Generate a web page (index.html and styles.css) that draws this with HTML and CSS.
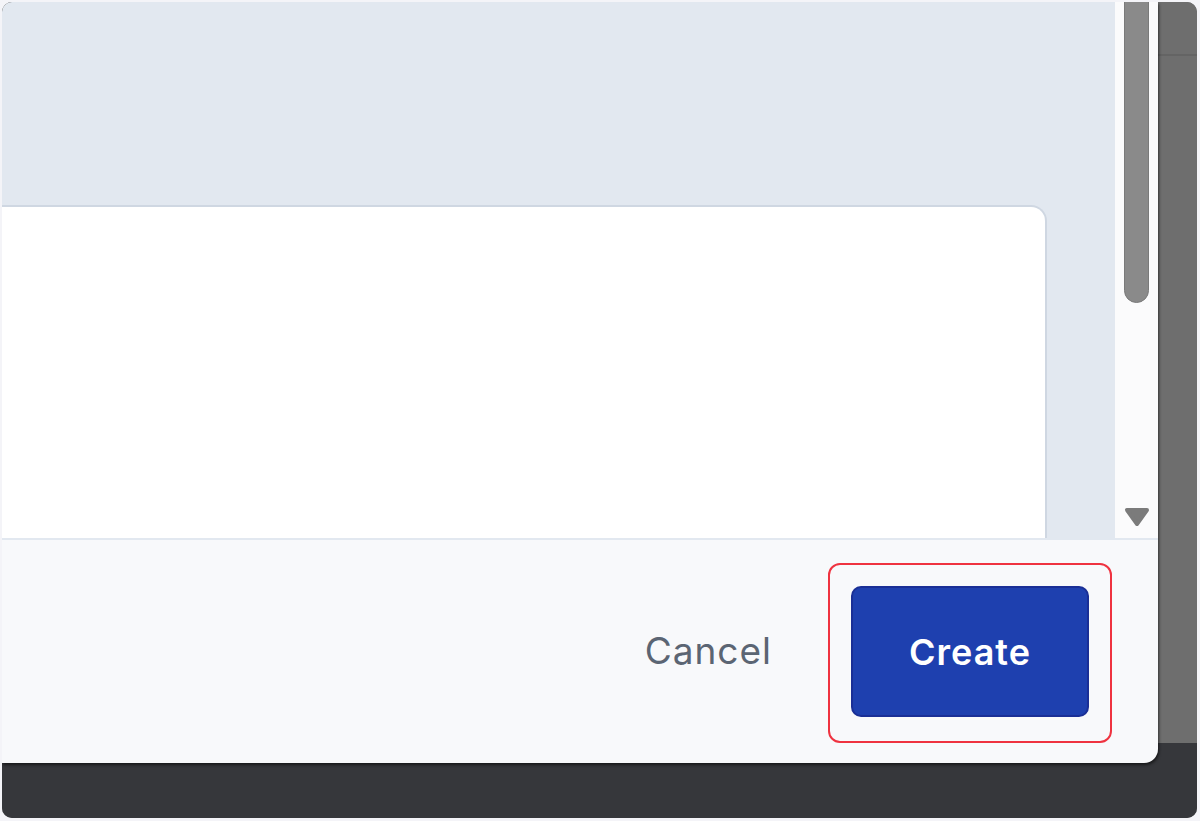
FILE: index.html
```html
<!DOCTYPE html>
<html lang="en">
<head>
<meta charset="utf-8">
<title>Create dialog</title>
<link rel="stylesheet" href="styles.css">
</head>
<body>
<div class="screen">
  <div class="backdrop">
    <div class="topbar"></div>
  </div>
  <div class="taskbar"></div>
  <div class="dialog">
    <div class="dialog-body">
      <div class="content">
        <div class="card"></div>
      </div>
      <div class="scrollbar">
        <div class="thumb"></div>
        <svg class="arrow" width="26" height="20" viewBox="0 0 26 20">
          <path d="M3 3 L23 3 L13 17 Z" fill="#7b7b7b" stroke="#7b7b7b" stroke-width="4" stroke-linejoin="round"/>
        </svg>
      </div>
    </div>
    <div class="footer">
      <button class="cancel" type="button">Cancel</button>
      <div class="highlight">
        <button class="create" type="button">Create</button>
      </div>
    </div>
  </div>
</div>
</body>
</html>
```

FILE: styles.css
```css
html, body {
  margin: 0;
  padding: 0;
  background: #f4f4f8;
}

.screen {
  position: relative;
  margin: 2px 3px 3px 2px;
  height: 816px;
  border-radius: 10px;
  overflow: hidden;
  display: flex;
  flex-direction: column;
  background: #6e6e6e;
}

.backdrop {
  flex: 1;
  background: #6e6e6e;
}

.topbar {
  height: 52px;
  border-bottom: 2px solid #646464;
}

.taskbar {
  height: 75px;
  background: #36373b;
}

.dialog {
  position: absolute;
  left: 0;
  top: 0;
  width: 1156px;
  height: 761px;
  display: flex;
  flex-direction: column;
  overflow: hidden;
  border-bottom-right-radius: 14px;
  box-shadow: 1px 2px 3px rgba(0, 0, 0, 0.55);
  font-family: Inter, "Liberation Sans", sans-serif;
}

.dialog-body {
  flex: 1;
  display: flex;
  min-height: 0;
}

.content {
  flex: 1;
  background: #e2e8f0;
  padding-top: 203px;
  display: flex;
}

.card {
  flex: 1;
  margin-left: -10px;
  margin-right: 68px;
  background: #ffffff;
  border-top: 2px solid #cfd7e2;
  border-right: 2px solid #cfd7e2;
  border-top-right-radius: 16px;
}

.scrollbar {
  width: 43px;
  background: #fbfbfc;
  display: flex;
  flex-direction: column;
  align-items: center;
  justify-content: space-between;
}

.thumb {
  margin-top: -20px;
  width: 23px;
  height: 319px;
  border: 1px solid #7a7a7a;
  border-radius: 13px;
  background: #8a8a8a;
}

.arrow {
  display: block;
  margin-bottom: 11px;
}

.footer {
  height: 220px;
  padding: 3px 46px 0 0;
  border-top: 2px solid #e2e8f0;
  background: #f8f9fb;
  display: flex;
  align-items: center;
  justify-content: flex-end;
  gap: 56px;
}

.cancel {
  border: none;
  background: none;
  padding: 0 0 6px 0;
  font-family: Inter, "Liberation Sans", sans-serif;
  font-size: 37px;
  letter-spacing: 1px;
  font-weight: 400;
  color: #5b6573;
}

.highlight {
  padding: 21px 21px 24px 21px;
  border: 2px solid #ef3340;
  border-radius: 12px;
  display: flex;
}

.create {
  width: 238px;
  height: 131px;
  border: 2px solid #1a2f96;
  border-radius: 10px;
  background: #1e40af;
  color: #ffffff;
  font-family: Inter, "Liberation Sans", sans-serif;
  font-size: 36px;
  letter-spacing: 1px;
  font-weight: 600;
  padding: 0;
}
```
